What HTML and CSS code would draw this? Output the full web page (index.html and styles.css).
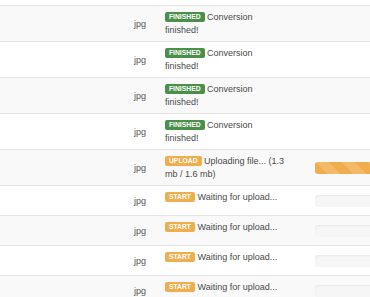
FILE: index.html
```html
<!DOCTYPE html>
<html lang="en">
<head>
  <meta charset="UTF-8" />
  <meta name="viewport" content="width=device-width, initial-scale=1.0" />
  <title>Uploads</title>
  <link rel="stylesheet" href="styles.css">
</head>
<body>
  <table class="uploads">
    <tbody>
      <tr>
        <td class="name"></td>
        <td class="ext">jpg</td>
        <td class="status"><span class="label done">FINISHED</span> Conversion finished!</td>
        <td class="bar"></td>
      </tr>
      <tr>
        <td class="name"></td>
        <td class="ext">jpg</td>
        <td class="status"><span class="label done">FINISHED</span> Conversion finished!</td>
        <td class="bar"></td>
      </tr>
      <tr>
        <td class="name"></td>
        <td class="ext">jpg</td>
        <td class="status"><span class="label done">FINISHED</span> Conversion finished!</td>
        <td class="bar"></td>
      </tr>
      <tr>
        <td class="name"></td>
        <td class="ext">jpg</td>
        <td class="status"><span class="label done">FINISHED</span> Conversion finished!</td>
        <td class="bar"></td>
      </tr>
      <tr>
        <td class="name"></td>
        <td class="ext">jpg</td>
        <td class="status"><span class="label warn">UPLOAD</span> Uploading file... (1.3 mb / 1.6 mb)</td>
        <td class="bar"><div class="progress"><div class="progress-bar striped" style="width: 81%"></div></div></td>
      </tr>
      <tr>
        <td class="name"></td>
        <td class="ext">jpg</td>
        <td class="status"><span class="label warn">START</span> Waiting for upload...</td>
        <td class="bar"><div class="progress"></div></td>
      </tr>
      <tr>
        <td class="name"></td>
        <td class="ext">jpg</td>
        <td class="status"><span class="label warn">START</span> Waiting for upload...</td>
        <td class="bar"><div class="progress"></div></td>
      </tr>
      <tr>
        <td class="name"></td>
        <td class="ext">jpg</td>
        <td class="status"><span class="label warn">START</span> Waiting for upload...</td>
        <td class="bar"><div class="progress"></div></td>
      </tr>
      <tr>
        <td class="name"></td>
        <td class="ext">jpg</td>
        <td class="status"><span class="label warn">START</span> Waiting for upload...</td>
        <td class="bar"><div class="progress"></div></td>
      </tr>
    </tbody>
  </table>
</body>
</html>
```

FILE: styles.css
```css
body {
  margin: 0;
  background-color: #fff;
  overflow: hidden;
  font-family: "Liberation Sans", Arial, sans-serif;
  font-size: 9px;
  line-height: 13px;
  color: #4a4a4a;
}

.uploads {
  margin-top: 5px;
  width: 430px;
  border-collapse: collapse;
  table-layout: fixed;
}

.uploads td {
  border-top: 1px solid #e4e4e4;
  padding: 5px 5px 4px;
  vertical-align: middle;
}

.uploads tr:nth-child(odd) td {
  background-color: #f9f9f9;
}

.name {
  width: 110px;
}

.ext {
  width: 30px;
  text-align: center;
  color: #555;
}

.status {
  width: 121px;
  vertical-align: top !important;
}

.bar {
  padding-left: 24px !important;
}

.label {
  display: inline-block;
  padding: 1px 4px 2px;
  font-size: 6.75px;
  font-weight: bold;
  line-height: 7px;
  color: #fff;
  border-radius: 2px;
  vertical-align: 1px;
}

.label.done {
  background-color: #4a904a;
}

.label.warn {
  background-color: #f0ad4e;
}

.progress {
  height: 12px;
  margin: 4px 0;
  background-color: #f6f6f6;
  border-radius: 3px;
  box-shadow: inset 0 1px 2px rgba(0, 0, 0, 0.06);
  overflow: hidden;
}

.progress-bar {
  height: 100%;
  background-color: #f0ad4e;
}

.striped {
  background-image: linear-gradient(45deg, rgba(255,255,255,.15) 25%, transparent 25%, transparent 50%, rgba(255,255,255,.15) 50%, rgba(255,255,255,.15) 75%, transparent 75%, transparent);
  background-size: 26px 26px;
}
```
